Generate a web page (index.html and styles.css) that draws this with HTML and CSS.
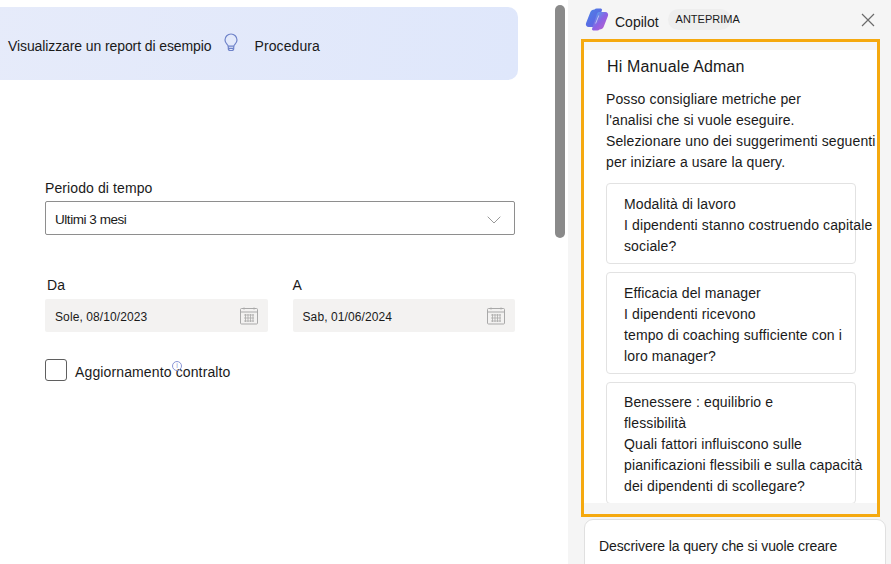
FILE: index.html
```html
<!DOCTYPE html>
<html lang="it">
<head>
	<meta charset="UTF-8">
	<meta name="viewport" content="width=device-width, initial-scale=1.0">
	<title>Copilot</title>
	<link rel="stylesheet" href="styles.css">
</head>
<body>
	<main class="main">
		<div class="banner">
			<span>Visualizzare un report di esempio</span>
			<svg class="bulb" width="20" height="20" viewBox="0 0 20 20" fill="none" stroke="#6f83c9" stroke-width="1.2">
				<path d="M7.2 13.2C7 11.6 4 10.6 4 7a6 6 0 0 1 12 0c0 3.600-3 4.600-3.200 6.200z"/>
				<path d="M7.300 13.200v2.300a2 2 0 0 0 2 2h1.400a2 2 0 0 0 2-2v-2.300M7.500 15.300h5"/>
			</svg>
			<span class="banner-link">Procedura</span>
		</div>
		<div class="scrollbar"></div>

		<form class="form">
			<label class="label">Periodo di tempo</label>
			<div class="select">
				<span class="select-value">Ultimi 3 mesi</span>
				<svg width="14" height="8" viewBox="0 0 14 8" fill="none" stroke="#999" stroke-width="1"><path d="M.7.7 7 7l6.300-6.300"/></svg>
			</div>

			<div class="dates">
				<div class="date-col">
					<label class="label label-date">Da</label>
					<div class="date">
						<span>Sole, 08/10/2023</span>
						<svg class="cal" width="18" height="18" viewBox="0 0 18 18" fill="none" stroke="#a9a9a9"><use href="#cal-shape"/></svg>
					</div>
				</div>
				<div class="date-col">
					<label class="label label-date label-to">A</label>
					<div class="date">
						<span>Sab, 01/06/2024</span>
						<svg class="cal" width="18" height="18" viewBox="0 0 18 18" fill="none" stroke="#a9a9a9"><use href="#cal-shape"/></svg>
					</div>
				</div>
			</div>

			<div class="check-row">
				<span class="checkbox"></span>
				<span class="check-text">Aggiornamento contralto<i class="info">i</i></span>
			</div>
		</form>

		<svg width="0" height="0" class="defs">
			<defs>
				<g id="cal-shape">
					<rect x=".5" y="1.500" width="17" height="15.500" rx="1"/>
					<path d="M.5 5h17M4 .5v2M14 .5v2"/>
					<path d="M4 8h10M4 11h10M4 14h10M5.500 7v8M8 7v8M10.500 7v8M13 7v8" stroke-width=".8"/>
				</g>
			</defs>
		</svg>
	</main>

	<aside class="panel">
		<header class="panel-head">
			<svg class="logo" width="24" height="23" viewBox="0 0 24 23">
				<defs>
					<linearGradient id="logoA" x1="0" y1="0" x2="1" y2="1">
						<stop offset="0" stop-color="#4a86e6"/>
						<stop offset=".55" stop-color="#5a6ce4"/>
						<stop offset="1" stop-color="#7f5ce0"/>
					</linearGradient>
					<linearGradient id="logoB" x1="0" y1="0" x2="1" y2="1">
						<stop offset="0" stop-color="#3fb6ee"/>
						<stop offset=".5" stop-color="#8a62e4"/>
						<stop offset="1" stop-color="#c65cc8"/>
					</linearGradient>
				</defs>
				<path fill="url(#logoA)" d="M9.500 1.500C10 .8 10.800.5 11.700.5h3.400c1 0 1.700.5 2 1.300L12 17.300c-.4 1-1.300 1.700-2.400 1.700H3.800C1.500 19 .4 17.200 1 15.300L5.200 4.500C5.800 2.600 7.500 1.500 9.500 1.500z"/>
				<path fill="url(#logoB)" d="M14.500 21.500c-.5.700-1.300 1-2.200 1H8.900c-1 0-1.700-.5-2-1.300L12 5.700C12.400 4.700 13.300 4 14.400 4h5.800c2.300 0 3.400 1.800 2.800 3.700l-4.200 10.800c-.6 1.900-2.300 3-4.300 3z"/>
				<path fill="#dfe6fb" opacity=".8" d="M13.400 7.500 14.200 7.500 11 15.500l-.8 0z"/>
			</svg>
			<span class="panel-name">Copilot</span>
			<span class="pill">ANTEPRIMA</span>
			<svg class="close" width="14" height="14" viewBox="0 0 14 14" stroke="#6b6b6b" stroke-width="1.200"><path d="M1 1l12 12M13 1 1 13"/></svg>
		</header>

		<section class="frame">
			<div class="chat">
				<h2 class="hello">Hi Manuale Adman</h2>
				<p class="intro">Posso consigliare metriche per<br>l'analisi che si vuole eseguire.<br>Selezionare uno dei suggerimenti seguenti<br>per iniziare a usare la query.</p>
				<div class="card">Modalità di lavoro<br>I dipendenti stanno costruendo capitale<br>sociale?</div>
				<div class="card">Efficacia del manager<br>I dipendenti ricevono<br>tempo di coaching sufficiente con i<br>loro manager?</div>
				<div class="card card-last">Benessere : equilibrio e<br>flessibilità<br>Quali fattori influiscono sulle<br>pianificazioni flessibili e sulla capacità<br>dei dipendenti di scollegare?</div>
			</div>
		</section>

		<div class="ask">Descrivere la query che si vuole creare</div>
	</aside>
</body>
</html>
```

FILE: styles.css
```css
html, body {
	margin: 0;
	height: 100%;
	overflow: hidden;
}
body {
	display: flex;
	width: 891px;
	height: 564px;
	font-family: "Liberation Sans", Arial, sans-serif;
	font-size: 14px;
	color: #1a1a1a;
	background: #fff;
}

/* parte sinistra */
.main {
	position: relative;
	width: 568px;
	flex: none;
}
.banner {
	display: flex;
	align-items: center;
	height: 73px;
	width: 530px;
	margin: 7px 0 0 -12px;
	padding: 4px 0 0 20px;
	box-sizing: border-box;
	border-radius: 10px;
	background: linear-gradient(100deg, #e6ebfa, #dfe7fb);
	letter-spacing: -.1px;
}
.bulb {
	margin: -5px 0 0 10px;
}
.banner-link {
	margin-left: 13px;
	letter-spacing: .1px;
}
.scrollbar {
	position: absolute;
	left: 555px;
	top: 5px;
	width: 10px;
	height: 233px;
	border-radius: 5px;
	background: #8a8a8a;
}
.defs {
	position: absolute;
}
.form {
	display: flex;
	flex-direction: column;
	width: 470px;
	margin: 99px 0 0 45px;
}
.label {
	line-height: 18px;
	margin-bottom: 4px;
	letter-spacing: .1px;
}
.select {
	display: flex;
	align-items: center;
	justify-content: space-between;
	height: 34px;
	padding: 3px 13px 0 9px;
	box-sizing: border-box;
	border: 1px solid #8e8e8e;
	border-radius: 2px;
}
.select-value {
	font-size: 13.500px;
	letter-spacing: -.45px;
}
.dates {
	display: flex;
	gap: 25px;
	margin-top: 41px;
}
.date-col {
	flex: 1;
}
.label-date {
	display: block;
	margin: 0 0 5px 2px;
}
.label-to {
	margin-left: 0;
}
.date {
	display: flex;
	align-items: center;
	justify-content: space-between;
	height: 33px;
	padding: 3px 10px 0;
	box-sizing: border-box;
	border-radius: 2px;
	background: #f3f2f1;
	font-size: 12px;
	letter-spacing: .1px;
}
.cal {
	margin-top: -3px;
}
.check-row {
	display: flex;
	align-items: center;
	gap: 8px;
	margin-top: 27px;
}
.checkbox {
	width: 20px;
	height: 20px;
	border: 1px solid #5f5f5f;
	border-radius: 3px;
}
.check-text {
	position: relative;
	margin-top: 4px;
	letter-spacing: .13px;
}
.info {
	position: absolute;
	left: 97px;
	top: -3px;
	width: 8px;
	height: 8px;
	border: 1px solid #8b96d6;
	border-radius: 50%;
	font: 7px/8px "Liberation Sans", sans-serif;
	text-align: center;
	color: #8b96d6;
}

/* pannello Copilot */
.panel {
	display: flex;
	flex-direction: column;
	flex: 1;
	background: #f5f5f5;
}
.panel-head {
	display: flex;
	align-items: center;
	flex: none;
	height: 39px;
	padding: 0 16px 0 17px;
	box-sizing: border-box;
}
.logo {
	margin-top: -1px;
}
.panel-name {
	margin: 4px 0 0 6px;
}
.pill {
	flex: none;
	width: 63px;
	height: 21px;
	margin: 0 auto 0 9px;
	padding-left: 8px;
	box-sizing: border-box;
	border-radius: 11px;
	background: #eeeeee;
	font-size: 11px;
	line-height: 20px;
	white-space: nowrap;
}
.frame {
	flex: none;
	width: 299px;
	height: 478px;
	margin-left: 13px;
	box-sizing: border-box;
	border: 3px solid #f5a90f;
	padding: 8px 0 11px;
	overflow: hidden;
}
.chat {
	height: 100%;
	padding: 6px 0 0 22px;
	box-sizing: border-box;
	background: #fff;
	overflow: hidden;
	line-height: 21px;
	letter-spacing: .12px;
	white-space: nowrap;
}
.hello {
	margin: 0 0 0 1px;
	font-size: 16px;
	font-weight: 400;
	line-height: 22px;
	letter-spacing: .15px;
}
.intro {
	margin: 11px 0 10px;
}
.card {
	width: 250px;
	padding: 10px 0 6px 17px;
	box-sizing: border-box;
	margin-bottom: 8px;
	border: 1px solid #e2e2e2;
	border-radius: 4px;
	background: #fff;
}
.card-last {
	padding-top: 9px;
	margin-bottom: 0;
}
.ask {
	flex: none;
	height: 60px;
	margin: 2px 5px 0 16px;
	padding: 18px 0 0 14px;
	box-sizing: border-box;
	border: 1px solid #e0e0e0;
	border-radius: 9px 9px 0 0;
	background: #fff;
	letter-spacing: -.1px;
}
```
